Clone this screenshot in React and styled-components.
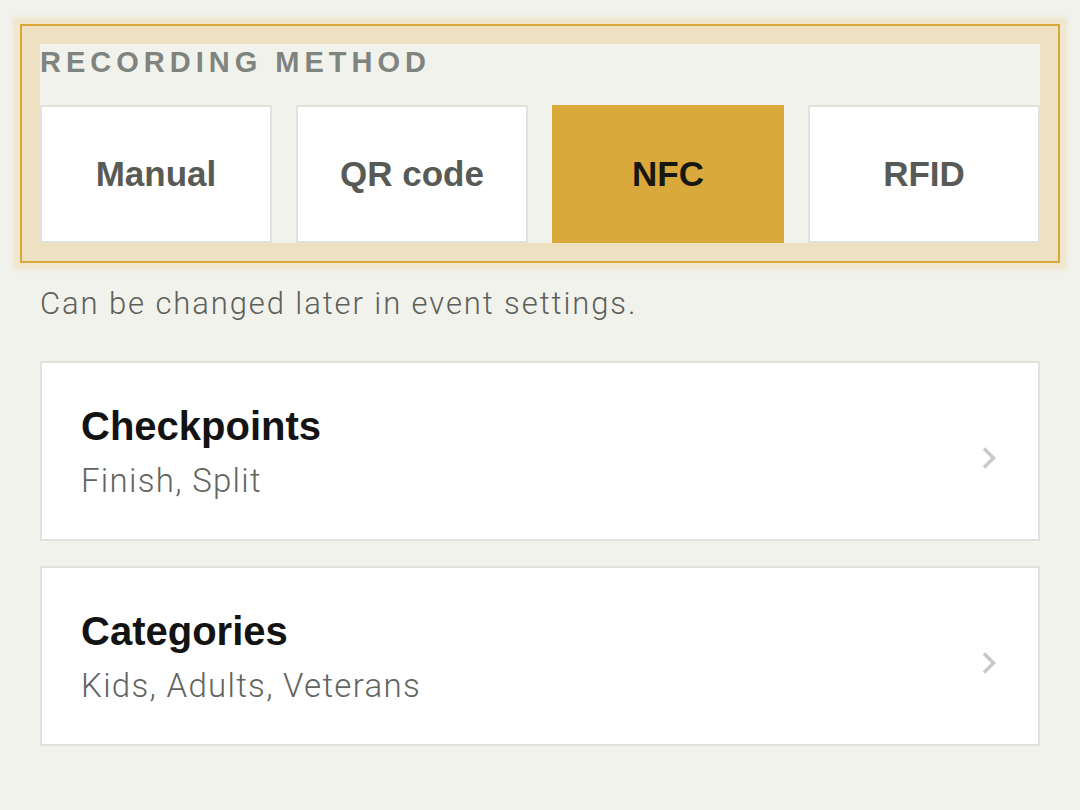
import styled, { createGlobalStyle } from 'styled-components';

const GlobalStyle = createGlobalStyle`
    html, body {
        margin: 0;
        background: #f2f2ed;
    }
    body {
        font-family: "Liberation Sans", Arial, sans-serif;
    }
`
const Page = styled.div`
    padding: 44px 40px;
    display: flex;
    flex-direction: column;
`
const Fieldset = styled.fieldset`
    margin: 0;
    padding: 0;
    border: none;
    min-width: 0;
    background: #f2f2ed;
    box-shadow: 0 0 0 20px #ede1c2, 0 0 4px 27px #efe6cd;
    outline: 2px solid #d9a83a;
    outline-offset: 18px;
`
const Legend = styled.div`
    font-family: "Liberation Sans", Arial, sans-serif;
    font-weight: 700;
    font-size: 29px;
    line-height: 36px;
    letter-spacing: 5px;
    color: #80847e;
    text-transform: uppercase;
    margin-bottom: 25px;
`
const Options = styled.div`
    display: grid;
    grid-template-columns: repeat(4, 1fr);
    gap: 24px;
`
const Option = styled.button`
    height: 138px;
    margin: 0;
    padding: 0;
    font-family: "Liberation Sans", Arial, sans-serif;
    font-weight: 700;
    font-size: 35px;
    color: ${p => (p.$active ? '#161712' : '#575a55')};
    background: ${p => (p.$active ? '#d9a93b' : '#ffffff')};
    border: 2px solid ${p => (p.$active ? '#d9a93b' : '#e2e2dc')};
    cursor: pointer;
`
const Hint = styled.p`
    margin: 41px 0 37px;
    font-family: Roboto, "Liberation Sans", sans-serif;
    font-weight: 300;
    font-size: 31px;
    line-height: 40px;
    letter-spacing: 1.9px;
    color: #5d605a;
`
const Cards = styled.div`
    display: flex;
    flex-direction: column;
    gap: 25px;
`
const Card = styled.div`
    height: 180px;
    box-sizing: border-box;
    background: #ffffff;
    border: 2px solid #e2e2dc;
    padding: 0 42px 0 39px;
    display: flex;
    align-items: center;
    justify-content: space-between;
    cursor: pointer;
`
const CardText = styled.div`
    display: flex;
    flex-direction: column;
`
const CardTitle = styled.div`
    font-family: "Liberation Sans", Arial, sans-serif;
    font-weight: 700;
    font-size: 40px;
    line-height: 48px;
    color: #131313;
`
const CardSub = styled.div`
    margin-top: 11px;
    font-family: Roboto, "Liberation Sans", sans-serif;
    font-weight: 300;
    font-size: 33px;
    line-height: 40px;
    letter-spacing: 1.3px;
    color: #62655f;
`
const Chevron = styled.svg`
    width: 14px;
    height: 22px;
    margin-top: 14px;
    flex-shrink: 0;
`

const methods = ['Manual', 'QR code', 'NFC', 'RFID']
const sections = [
    { title: 'Checkpoints', sub: 'Finish, Split' },
    { title: 'Categories', sub: 'Kids, Adults, Veterans' },
]

const App = () => {
    return (
        <Page>
            <GlobalStyle />
            <Fieldset>
                <Legend>Recording method</Legend>
                <Options>
                    {methods.map(m => (
                        <Option key={m} $active={m === 'NFC'}>{m}</Option>
                    ))}
                </Options>
            </Fieldset>
            <Hint>Can be changed later in event settings.</Hint>
            <Cards>
                {sections.map(s => (
                    <Card key={s.title}>
                        <CardText>
                            <CardTitle>{s.title}</CardTitle>
                            <CardSub>{s.sub}</CardSub>
                        </CardText>
                        <Chevron viewBox="0 0 14 22">
                            <polyline points="2,1.5 11.5,11 2,20.5" fill="none" stroke="#c9c9c3" strokeWidth="3.5" />
                        </Chevron>
                    </Card>
                ))}
            </Cards>
        </Page>
    )
}

export default App;
